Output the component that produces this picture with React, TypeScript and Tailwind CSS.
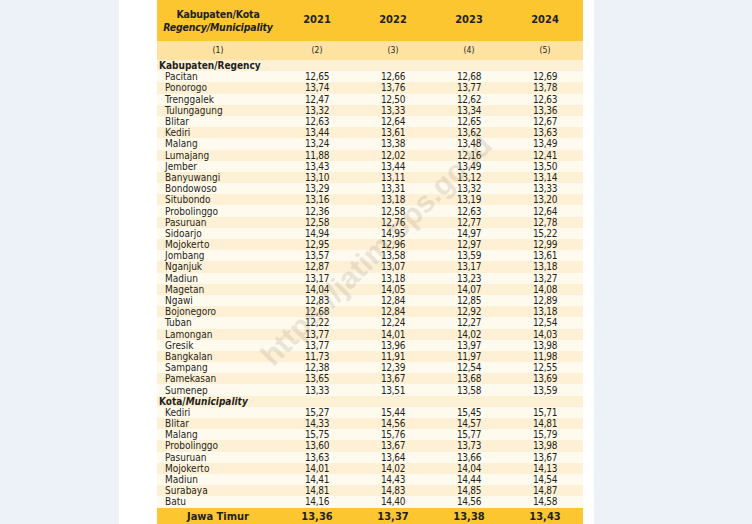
const kabupaten: [string, string[]][] = [
  ["Pacitan", ["12,65", "12,66", "12,68", "12,69"]],
  ["Ponorogo", ["13,74", "13,76", "13,77", "13,78"]],
  ["Trenggalek", ["12,47", "12,50", "12,62", "12,63"]],
  ["Tulungagung", ["13,32", "13,33", "13,34", "13,36"]],
  ["Blitar", ["12,63", "12,64", "12,65", "12,67"]],
  ["Kediri", ["13,44", "13,61", "13,62", "13,63"]],
  ["Malang", ["13,24", "13,38", "13,48", "13,49"]],
  ["Lumajang", ["11,88", "12,02", "12,16", "12,41"]],
  ["Jember", ["13,43", "13,44", "13,49", "13,50"]],
  ["Banyuwangi", ["13,10", "13,11", "13,12", "13,14"]],
  ["Bondowoso", ["13,29", "13,31", "13,32", "13,33"]],
  ["Situbondo", ["13,16", "13,18", "13,19", "13,20"]],
  ["Probolinggo", ["12,36", "12,58", "12,63", "12,64"]],
  ["Pasuruan", ["12,58", "12,76", "12,77", "12,78"]],
  ["Sidoarjo", ["14,94", "14,95", "14,97", "15,22"]],
  ["Mojokerto", ["12,95", "12,96", "12,97", "12,99"]],
  ["Jombang", ["13,57", "13,58", "13,59", "13,61"]],
  ["Nganjuk", ["12,87", "13,07", "13,17", "13,18"]],
  ["Madiun", ["13,17", "13,18", "13,23", "13,27"]],
  ["Magetan", ["14,04", "14,05", "14,07", "14,08"]],
  ["Ngawi", ["12,83", "12,84", "12,85", "12,89"]],
  ["Bojonegoro", ["12,68", "12,84", "12,92", "13,18"]],
  ["Tuban", ["12,22", "12,24", "12,27", "12,54"]],
  ["Lamongan", ["13,77", "14,01", "14,02", "14,03"]],
  ["Gresik", ["13,77", "13,96", "13,97", "13,98"]],
  ["Bangkalan", ["11,73", "11,91", "11,97", "11,98"]],
  ["Sampang", ["12,38", "12,39", "12,54", "12,55"]],
  ["Pamekasan", ["13,65", "13,67", "13,68", "13,69"]],
  ["Sumenep", ["13,33", "13,51", "13,58", "13,59"]],
];

const kota: [string, string[]][] = [
  ["Kediri", ["15,27", "15,44", "15,45", "15,71"]],
  ["Blitar", ["14,33", "14,56", "14,57", "14,81"]],
  ["Malang", ["15,75", "15,76", "15,77", "15,79"]],
  ["Probolinggo", ["13,60", "13,67", "13,73", "13,98"]],
  ["Pasuruan", ["13,63", "13,64", "13,66", "13,67"]],
  ["Mojokerto", ["14,01", "14,02", "14,04", "14,13"]],
  ["Madiun", ["14,41", "14,43", "14,44", "14,54"]],
  ["Surabaya", ["14,81", "14,83", "14,85", "14,87"]],
  ["Batu", ["14,16", "14,40", "14,56", "14,58"]],
];

const years = ["2021", "2022", "2023", "2024"];
const grid = "grid grid-cols-[122px_repeat(4,76px)]";
const font = { fontFamily: "'DejaVu Sans Condensed', 'Liberation Sans', sans-serif" };

const Row = ({ name, values, stripe }: { name: string; values: string[]; stripe: boolean }) => (
  <div className={`${grid} h-[11.2px] items-center overflow-hidden text-[10px] leading-[11px] ${stripe ? "bg-[#fdf0d5]" : "bg-[#fffaee]"}`}>
    <span className="pl-[8px]">{name}</span>
    {values.map((v, i) => (
      <span key={i} className="text-center tracking-[-0.3px]">{v}</span>
    ))}
  </div>
);

export default function App() {
  return (
    <div className="flex h-[524px] w-full overflow-hidden bg-[#edf1f8]">
      <div className="relative ml-[119px] h-[524px] w-[475px] overflow-hidden bg-white pl-[38px] pr-[11px] text-[#231f20]" style={font}>
        <div className={`${grid} h-[41px] items-center bg-[#fcc630] font-bold`}>
          <div className="flex flex-col items-center text-[10.5px] leading-[13px] tracking-[-0.2px]">
            <span>Kabupaten/Kota</span>
            <span className="italic">Regency/Municipality</span>
          </div>
          {years.map((y) => (
            <span key={y} className="text-center text-[11px]">{y}</span>
          ))}
        </div>
        <div className={`${grid} h-[19px] items-center bg-[#fde2a2] text-[8.5px]`}>
          {["(1)", "(2)", "(3)", "(4)", "(5)"].map((c) => (
            <span key={c} className="text-center">{c}</span>
          ))}
        </div>
        <div className="flex h-[11.2px] items-center overflow-hidden bg-[#fdf0d5] pl-[2px] text-[10px] font-bold leading-[11px]">
          Kabupaten/Regency
        </div>
        {kabupaten.map(([n, v], i) => (
          <Row key={n} name={n} values={v} stripe={i % 2 === 1} />
        ))}
        <div className="flex h-[11.2px] items-center overflow-hidden bg-[#fdf0d5] pl-[2px] text-[10px] font-bold leading-[11px]">
          Kota/<span className="italic">Municipality</span>
        </div>
        {kota.map(([n, v], i) => (
          <Row key={n} name={n} values={v} stripe={i % 2 === 1} />
        ))}
        <div className={`${grid} h-[20px] items-center bg-[#fcc630] text-[11px] font-bold`}>
          <span className="text-center">Jawa Timur</span>
          {["13,36", "13,37", "13,38", "13,43"].map((v) => (
            <span key={v} className="text-center">{v}</span>
          ))}
        </div>
        <span
          className="pointer-events-none absolute left-[257px] top-[250px] -translate-x-1/2 -translate-y-1/2 -rotate-45 whitespace-nowrap text-[30px] font-bold text-[#7a705e] opacity-[0.15]"
          style={{ fontFamily: "'Liberation Sans', sans-serif" }}
        >
          https://jatim.bps.go.id
        </span>
      </div>
    </div>
  );
}
